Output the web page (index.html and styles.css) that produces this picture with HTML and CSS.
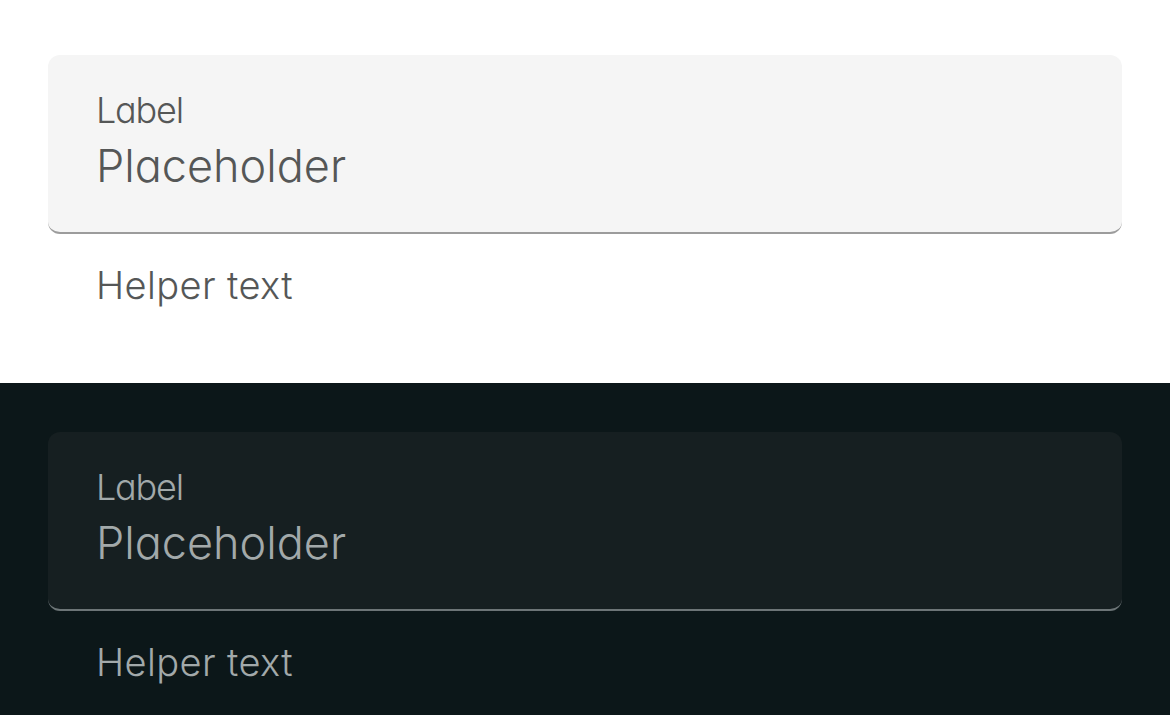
FILE: index.html
```html
<!DOCTYPE html>
<html lang="en">
<head>
<meta charset="utf-8">
<title>Text field</title>
<link rel="stylesheet" href="styles.css">
</head>
<body>
  <section class="theme theme-light">
    <div class="field">
      <div class="field-label">Label</div>
      <div class="field-input">Placeholder</div>
    </div>
    <div class="field-helper">Helper text</div>
  </section>
  <section class="theme theme-dark">
    <div class="field">
      <div class="field-label">Label</div>
      <div class="field-input">Placeholder</div>
    </div>
    <div class="field-helper">Helper text</div>
  </section>
</body>
</html>
```
FILE: styles.css
```css
html, body {
  margin: 0;
  padding: 0;
}
body {
  width: 1170px;
  height: 715px;
  overflow: hidden;
  font-family: Inter, "Liberation Sans", sans-serif;
  font-weight: 300;
  font-feature-settings: "cv11" 1;
}
.theme {
  padding: 0 48px;
  box-sizing: border-box;
}
.theme-light {
  background: #ffffff;
  height: 383px;
  padding-top: 55px;
  color: #555757;
}
.theme-dark {
  background: #0c1719;
  height: 332px;
  padding-top: 49px;
  color: #a2a9aa;
}
.field {
  border-radius: 12px;
  padding: 37px 48px 0;
  box-sizing: content-box;
  height: 140px;
}
.theme-light .field {
  background: #f5f5f5;
  border-bottom: 2px solid #9c9c9c;
}
.theme-dark .field {
  background: #161f21;
  border-bottom: 2px solid #6d7577;
}
.field-label {
  font-size: 36px;
  line-height: 36px;
  height: 36px;
  letter-spacing: -1.2px;
}
.field-input {
  font-size: 45px;
  line-height: 48px;
  margin-top: 14px;
}
.field-helper {
  font-size: 38px;
  line-height: 36px;
  margin-top: 33px;
  padding-left: 48px;
  letter-spacing: 0.4px;
}
```
